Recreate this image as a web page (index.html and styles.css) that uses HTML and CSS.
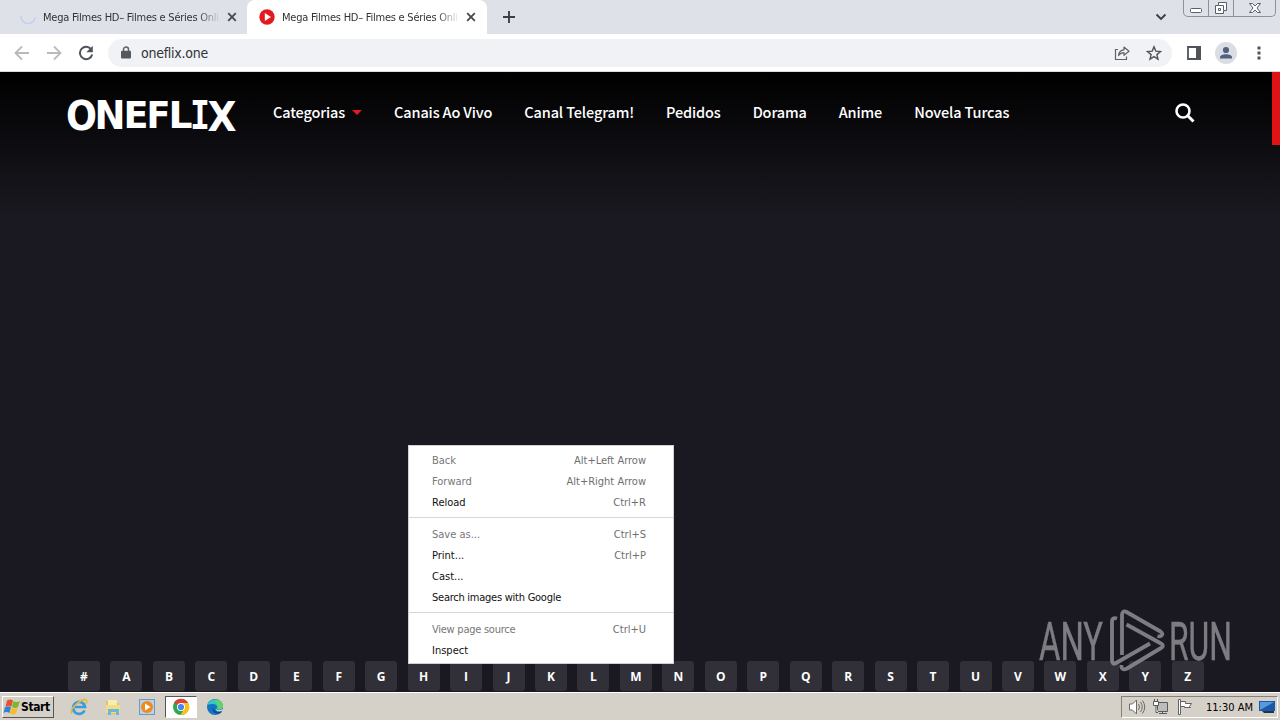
FILE: index.html
```html
<!DOCTYPE html>
<html lang="pt-BR">
<head>
  <meta charset="UTF-8" />
  <meta name="viewport" content="width=device-width, initial-scale=1.0"/>
  <title>Mega Filmes HD</title>
  <link rel="stylesheet" href="styles.css">
</head>
<body>
  <div class="tab-strip">
    <div class="tab">
      <svg class="favicon" viewBox="0 0 16 16"><path d="M1 7a7 7 0 0 0 14 1" fill="none" stroke="#c5cff0" stroke-width="1.6"/></svg>
      <span class="tab-title">Mega Filmes HD– Filmes e Séries Onli</span>
      <svg class="tab-close" viewBox="0 0 10 10"><path d="M1.2 1.2l7.6 7.6M8.8 1.2L1.2 8.8"/></svg>
    </div>
    <div class="tab active">
      <svg class="favicon" viewBox="0 0 16 16"><circle cx="8" cy="8" r="7.7" fill="#e31b1e"/><path d="M5.8 4.1v7.8L12 8z" fill="#fff"/></svg>
      <span class="tab-title">Mega Filmes HD– Filmes e Séries Onli</span>
      <svg class="tab-close" viewBox="0 0 10 10"><path d="M1.2 1.2l7.6 7.6M8.8 1.2L1.2 8.8"/></svg>
    </div>
    <svg class="new-tab" viewBox="0 0 12 12"><path d="M6 0v12M0 6h12" stroke="#3c4043" stroke-width="1.9"/></svg>
    <svg class="tab-search" viewBox="0 0 12 8"><path d="M1.5 1.5L6 6l4.500-4.500" fill="none" stroke="#3c4043" stroke-width="1.900"/></svg>
    <div class="window-buttons">
      <span class="win-btn"><svg width="14" height="16"><rect x="1.500" y="8.500" width="11" height="4" rx="1" fill="#fff" stroke="#5b5f68"/></svg></span>
      <span class="win-btn"><svg width="14" height="16"><path d="M4.500 2.500h8v8h-3v3h-8v-8h3z" fill="#fff" stroke="#5b5f68"/><path d="M4.500 5.500h5v5M4.500 8.500h2v2h-2z" fill="none" stroke="#5b5f68"/></svg></span>
      <span class="win-btn"><svg width="14" height="16"><path d="M1.500 3.500h3L7 6l2.500-2.500h3L9 8l3.500 4.500h-3L7 10l-2.500 2.500h-3L5 8z" fill="#fff" stroke="#5b5f68"/></svg></span>
    </div>
  </div>

  <div class="toolbar">
    <div class="nav-buttons">
      <svg width="16" height="16" viewBox="0 0 16 16"><path d="M15 8H2M8 1.500L1.500 8 8 14.500" fill="none" stroke="#b8babd" stroke-width="1.800"/></svg>
      <svg width="16" height="16" viewBox="0 0 16 16"><path d="M1 8h13M8 1.500L14.500 8 8 14.500" fill="none" stroke="#b8babd" stroke-width="1.800"/></svg>
      <svg width="16" height="16" viewBox="0 0 16 16"><path d="M13.300 4.500A6.200 6.200 0 1 0 14.200 9.500" fill="none" stroke="#505459" stroke-width="2"/><path d="M14.800 0.800v6.500H8.300z" fill="#505459"/></svg>
    </div>
    <div class="omnibox">
      <svg class="lock" width="10" height="13" viewBox="0 0 10 13"><path d="M2.500 6V3.500a2.500 2.500 0 0 1 5 0V6" fill="none" stroke="#5f6368" stroke-width="1.500"/><rect y="4.700" width="10" height="7.800" rx="1" fill="#55585d"/></svg>
      <span class="url">oneflix.one</span>
      <svg class="share" width="16" height="16" viewBox="0 0 16 16"><path d="M4 4.500H1.500v10h11v-3" fill="none" stroke="#5f6368" stroke-width="1.200"/><path d="M4.500 10.500c.4-4 2.500-5.500 5.500-5.700V2L15 6.300 10 10.300V7.700c-2.500 0-4 .8-5.500 2.800z" fill="none" stroke="#5f6368" stroke-width="1.200" stroke-linejoin="round"/></svg>
      <svg class="star" width="16" height="16" viewBox="0 0 16 16"><path d="M8 1.800l1.800 4.300 4.700.4-3.600 3.100 1.100 4.600L8 11.700l-4 2.500 1.100-4.600-3.600-3.100 4.700-.4z" fill="none" stroke="#505459" stroke-width="1.400"/></svg>
    </div>
    <svg class="side-panel" width="14" height="14"><path d="M1 1h12v12H1z" fill="none" stroke="#505459" stroke-width="1.800"/><path d="M9 0h5v14H9z" fill="#505459"/></svg>
    <svg class="profile" width="22" height="22" viewBox="0 0 22 22"><circle cx="11" cy="11" r="11" fill="#dadde3"/><circle cx="11" cy="8" r="3.100" fill="#51617f"/><path d="M5 16.500v-1.200c0-2 3-3 6-3s6 1 6 3v1.200z" fill="#51617f"/></svg>
    <svg class="more" width="4" height="14"><path d="M.5.500h3v3h-3zM.5 5.500h3v3h-3zM.5 10.500h3v3h-3z" fill="#505459"/></svg>
  </div>

  <main class="page">
    <header class="site-header">
      <svg class="logo" width="172" height="40" viewBox="0 0 172 40">
        <g class="logo-text">
          <text x="0" y="34.500" font-size="40" textLength="31" lengthAdjust="spacingAndGlyphs">O</text>
          <text x="28.500" y="33.500" font-size="38.500" textLength="31" lengthAdjust="spacingAndGlyphs">N</text>
          <text x="57.500" y="32.500" font-size="38" textLength="25" lengthAdjust="spacingAndGlyphs">E</text>
          <text x="80.500" y="32.500" font-size="38" textLength="24" lengthAdjust="spacingAndGlyphs">F</text>
          <text x="102.500" y="33" font-size="38" textLength="24" lengthAdjust="spacingAndGlyphs">L</text>
          <text class="slab" x="124" y="33.500" font-size="38.500" textLength="20" lengthAdjust="spacingAndGlyphs">I</text>
          <text x="141.500" y="35.500" font-size="40.500" textLength="29" lengthAdjust="spacingAndGlyphs">X</text>
        </g>
      </svg>
      <nav class="menu">
        <a class="has-sub">Categorias</a>
        <a>Canais Ao Vivo</a>
        <a>Canal Telegram!</a>
        <a>Pedidos</a>
        <a>Dorama</a>
        <a>Anime</a>
        <a>Novela Turcas</a>
      </nav>
      <svg class="search" width="20" height="20" viewBox="0 0 20 20"><circle cx="8" cy="8" r="6.500" fill="none" stroke="#fff" stroke-width="2.600"/><path d="M12.500 12.500l6 6" stroke="#fff" stroke-width="3"/></svg>
    </header>

    <ul class="az-list">
      <li>#</li><li>A</li><li>B</li><li>C</li><li>D</li><li>E</li><li>F</li><li>G</li><li>H</li>
      <li>I</li><li>J</li><li>K</li><li>L</li><li>M</li><li>N</li><li>O</li><li>P</li><li>Q</li>
      <li>R</li><li>S</li><li>T</li><li>U</li><li>V</li><li>W</li><li>X</li><li>Y</li><li>Z</li>
    </ul>
    <div class="scroll-thumb"></div>
  </main>

  <div class="context-menu">
    <div class="item off"><span>Back</span><kbd>Alt+Left Arrow</kbd></div>
    <div class="item off"><span>Forward</span><kbd>Alt+Right Arrow</kbd></div>
    <div class="item"><span>Reload</span><kbd>Ctrl+R</kbd></div>
    <hr>
    <div class="item off"><span>Save as...</span><kbd>Ctrl+S</kbd></div>
    <div class="item"><span>Print...</span><kbd>Ctrl+P</kbd></div>
    <div class="item"><span>Cast...</span></div>
    <div class="item"><span class="tight">Search images with Google</span></div>
    <hr>
    <div class="item off"><span class="tight">View page source</span><kbd>Ctrl+U</kbd></div>
    <div class="item"><span>Inspect</span></div>
  </div>

  <svg class="watermark" width="196" height="64" viewBox="0 0 196 64">
    <text x="2" y="51" textLength="64" lengthAdjust="spacingAndGlyphs">ANY</text>
    <text x="132" y="51" textLength="63" lengthAdjust="spacingAndGlyphs">RUN</text>
    <g fill="none" stroke="#8f8e93" stroke-width="3.800" stroke-linejoin="round">
      <path d="M80 9.500c-3-1-5 0-5 3v39c0 3 1.500 4 4 2.500l34-19.500"/>
      <path d="M85 46V6c0-3 2-4.500 4.500-3l34 19.500c3 2 2 6-3 4.500"/>
      <path d="M89.500 15.500l34.500 19c2.500 1.300 2.500 3 0 4.500L90 59.500c-3.500 2-6 .5-5.500-3.500"/>
    </g>
  </svg>

  <div class="taskbar">
    <div class="start">
      <svg width="18" height="18" viewBox="0 0 18 18"><path d="M4 2.500q3-2 6 0L8.500 8.500q-3-1.500-6 0z" fill="#e5532c"/><path d="M10.500 3q3 2 6.500 0L15 9q-3 2-6 0z" fill="#7db72f"/><path d="M2 9q3-1.500 6 0L6.500 15q-3-2-6 0z" fill="#3a7fd0"/><path d="M8.700 9.700q3 2 6 0L13 15.500q-3 2-6 0z" fill="#f5bd27"/></svg>
      <span>Start</span>
    </div>
    <div class="quick-launch">
      <span class="task"><svg width="18" height="18" viewBox="0 0 18 18"><path d="M14.500 12.500A6 6 0 1 1 15 9H5" fill="none" stroke="#3c9ddb" stroke-width="2.700"/><path d="M2 16C-2 11 13-1 16.500 2c1 1 0 3-1 4" fill="none" stroke="#e6b93c" stroke-width="1.500"/></svg></span>
      <span class="task"><svg width="18" height="18" viewBox="0 0 18 18"><path d="M2 3h5l1 2h7v11H2z" fill="#e3c35f"/><path d="M4 2h9v6H4z" fill="#f6edae"/><path d="M2 7h14v8H2z" fill="#f2dc88"/><path d="M4 17v-6h11v6h-3v-3H7v3z" fill="#68b8df"/></svg></span>
      <span class="task"><svg width="18" height="18" viewBox="0 0 18 18"><rect x="1.500" y="1.500" width="15" height="15" fill="#b8d3e9" stroke="#669acb"/><circle cx="9" cy="9" r="6" fill="#f18a1c"/><path d="M7 5.500v7L12.500 9z" fill="#fff"/></svg></span>
      <span class="task pressed"><svg width="18" height="18" viewBox="0 0 18 18"><circle cx="9" cy="9" r="8" fill="#2da94f"/><path d="M9 9L2 5a8 8 0 0 1 14 0z" fill="#dc4437"/><path d="M9 5h7.200A8 8 0 0 1 8.500 17L12 11z" fill="#fbc116"/><circle cx="9" cy="9" r="4" fill="#fff"/><circle cx="9" cy="9" r="3.100" fill="#4285f4"/></svg></span>
      <span class="task"><svg width="18" height="18" viewBox="0 0 18 18"><circle cx="9" cy="9" r="8" fill="#1474c4"/><path d="M1.500 7C3 0 15-1 17 8c0 3-3 4-6 3 1-3-1-5-4-5-2 0-4 0-5.500 1z" fill="#36c7c0"/><path d="M9 2c5-1 8 3 8 6 0 3-3 4-6 3 1-2 1-4-1-6z" fill="#64d26a"/><path d="M7 9c0 4 4 6 9 4l-1 2C9 17 5 13 7 9z" fill="#114b98"/><path d="M10 10c0 2 3 3 7 1l-1 2c-4 1-7 0-6-3z" fill="#d6d1c8"/></svg></span>
    </div>
    <div class="tray">
      <svg width="18" height="18" viewBox="0 0 18 18" fill="none" stroke="#6b6b6b"><path d="M1.500 6h3l4-4v14l-4-4h-3z" fill="#fff"/><path d="M10.500 6q2 3 0 6M12.500 4q3.500 5 0 10M14.500 2.500q4.500 6.500 0 13"/></svg>
      <svg width="18" height="18" viewBox="0 0 18 18" fill="none" stroke="#5b5b5b"><path d="M5.500 4.500h10v9h-10zM7 15.500h8M10.500 13.500v2" fill="#bcbcbc"/><path d="M1.500 3.500h5v4h-5zM2.500 1v2.500M5.500 1v2.500M4 7.500v7h2" fill="#fff"/></svg>
      <svg width="18" height="18" viewBox="0 0 18 18" fill="#fff" stroke="#626262"><path d="M2.500 1.500h2v15h-2z"/><path d="M4.500 3.500h5v2h6l-2 3 1 1h-6v-1h-4z"/></svg>
      <span class="clock">11:30 AM</span>
      <svg class="desktop" width="16" height="14" viewBox="0 0 16 14"><path d="M0 1h16v10H0z" fill="#185aa8"/><path d="M1 2h14L1 10z" fill="#5699dc"/><path d="M3 11h12v2H5z" fill="#26344b"/></svg>
    </div>
  </div>
</body>
</html>
```
FILE: styles.css
```css
* {
  margin: 0;
  padding: 0;
  box-sizing: border-box;
}

body {
  width: 1280px;
  height: 720px;
  display: flex;
  flex-direction: column;
  position: relative;
  overflow: hidden;
  font-family: 'DejaVu Sans Condensed', 'DejaVu Sans', sans-serif;
  font-size: 11px;
  background: #1a1921;
}

svg {
  display: block;
  flex-shrink: 0;
}

/* browser tabs */
.tab-strip {
  height: 34px;
  flex-shrink: 0;
  display: flex;
  align-items: center;
  background: #dee1e8;
  padding-left: 8px;
}

.tab {
  width: 239px;
  height: 34px;
  display: flex;
  align-items: center;
  padding-left: 12px;
  color: #303236;
}

.tab.active {
  width: 240px;
  background: #fff;
  border-radius: 8px 8px 0 0;
}

.favicon {
  width: 16px;
  height: 16px;
  margin-right: 7px;
}

.tab-title {
  width: 177px;
  overflow: hidden;
  white-space: nowrap;
  letter-spacing: -0.24px;
  -webkit-mask-image: linear-gradient(to right, #000 154px, transparent 178px);
  mask-image: linear-gradient(to right, #000 154px, transparent 178px);
}

.tab-close {
  width: 10px;
  height: 10px;
  margin-left: 7px;
}

.tab-close path {
  stroke: #45494d;
  stroke-width: 1.8;
}

.new-tab {
  width: 12px;
  height: 12px;
  margin-left: 16px;
}

.tab-search {
  width: 12px;
  height: 8px;
  margin-left: auto;
}

.window-buttons {
  height: 17px;
  display: flex;
  align-self: flex-start;
  margin: 0 4px 0 16px;
  border: 1px solid #8d919a;
  border-top: none;
  border-radius: 0 0 5px 5px;
}

.win-btn {
  width: 25px;
  display: flex;
  justify-content: center;
  border-right: 1px solid #8d919a;
}

.win-btn:last-child {
  width: 41px;
  border-right: none;
}

/* address bar */
.toolbar {
  height: 38px;
  flex-shrink: 0;
  display: flex;
  align-items: center;
  background: #fff;
  border-bottom: 1px solid #d9dadc;
  padding-left: 14px;
}

.nav-buttons {
  display: flex;
  gap: 16px;
}

.omnibox {
  width: 1064px;
  height: 28px;
  display: flex;
  align-items: center;
  margin-left: 14px;
  padding: 0 10px 0 13px;
  border-radius: 14px;
  background: #f0f2f5;
}

.url {
  margin-left: 10px;
  font-size: 14px;
  letter-spacing: -0.25px;
  color: #303236;
}

.share {
  margin-left: auto;
}

.star {
  margin-left: 16px;
}

.side-panel {
  margin-left: 15px;
}

.profile {
  margin-left: 14px;
}

.more {
  margin-left: 20px;
}

/* site */
.page {
  flex: 1;
  display: flex;
  flex-direction: column;
  justify-content: space-between;
  position: relative;
  background: linear-gradient(#000, #1a1921 145px);
}

.site-header {
  height: 82px;
  display: flex;
  align-items: center;
  padding: 0 85px 0 66px;
}

.logo {
  margin-top: 3px;
}

.logo-text {
  font-family: 'DejaVu Sans', sans-serif;
  font-weight: 700;
  fill: #fff;
}

.logo-text .slab {
  font-family: 'DejaVu Sans Mono', monospace;
}

.menu {
  display: flex;
  gap: 32px;
  margin: -4px 0 0 35px;
  font-family: 'Noto Sans CJK JP', sans-serif;
  font-size: 14.5px;
  font-weight: 500;
  letter-spacing: -0.14px;
  color: #fff;
  white-space: nowrap;
}

.has-sub {
  display: flex;
  align-items: center;
}

.has-sub::after {
  content: '';
  margin: 2px 0 0 7px;
  border: 5px solid transparent;
  border-top-color: #e11a1e;
  border-bottom: none;
}

.search {
  margin-left: auto;
}

.az-list {
  display: flex;
  justify-content: space-between;
  padding: 0 76px 1px 68px;
  list-style: none;
}

.az-list li {
  width: 32px;
  height: 30px;
  border-radius: 3px;
  background: #312f38;
  color: #fff;
  font-family: 'Open Sans', sans-serif;
  font-size: 12px;
  font-weight: 700;
  line-height: 31px;
  text-align: center;
}

.scroll-thumb {
  position: absolute;
  top: 0;
  right: 0;
  width: 8px;
  height: 73px;
  background: #df1316;
}

/* right-click menu */
.context-menu {
  position: absolute;
  left: 408px;
  top: 445px;
  width: 266px;
  height: 219px;
  padding: 4px 0;
  border: 1px solid #d0d0d2;
  background: #fff;
}

.item {
  height: 21px;
  display: flex;
  justify-content: space-between;
  align-items: center;
  padding: 0 27px 0 23px;
  color: #111;
}

.item kbd {
  font-family: inherit;
  color: #6f6f6f;
}

.item.off {
  color: #777;
}

.tight {
  letter-spacing: -0.25px;
}

.context-menu hr {
  margin: 4px 0 6px;
  border: none;
  border-top: 1px solid #d6d6d6;
}

.watermark {
  position: absolute;
  left: 1037px;
  top: 609px;
  opacity: 0.85;
}

.watermark text {
  font-family: 'Roboto', sans-serif;
  font-size: 53px;
  font-weight: 400;
  fill: #8f8e93;
  stroke: #8f8e93;
  stroke-width: 0.5px;
}

/* taskbar */
.taskbar {
  height: 28px;
  flex-shrink: 0;
  display: flex;
  align-items: center;
  background: #d6d1c8;
  border-top: 1px solid #fff;
  padding: 1px 2px 0;
}

.start {
  width: 52px;
  height: 22px;
  display: flex;
  align-items: center;
  border: 1px solid;
  border-color: #fff #555 #555 #fff;
  font-size: 12px;
  font-weight: bold;
  letter-spacing: -0.4px;
  color: #000;
}

.quick-launch {
  display: flex;
  margin-left: 9px;
  gap: 2px;
}

.task {
  width: 32px;
  height: 22px;
  display: flex;
  align-items: center;
  justify-content: center;
}

.task.pressed {
  background: #fff;
  border: 1px solid;
  border-color: #555 #fff #fff #555;
}

.tray {
  width: 157px;
  height: 22px;
  display: flex;
  align-items: center;
  margin-left: auto;
  padding: 0 2px 0 6px;
  gap: 6px;
  border: 1px solid;
  border-color: #85827b #fff #fff #85827b;
}

.clock {
  margin-left: 6px;
  white-space: nowrap;
  color: #000;
}

.desktop {
  margin-left: auto;
}
```
